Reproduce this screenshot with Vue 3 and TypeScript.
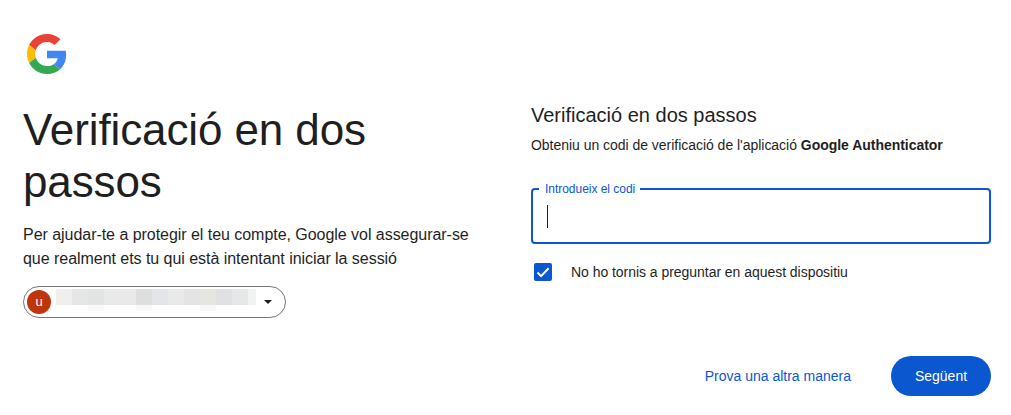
<script setup lang="ts">
const blurTop = ['#efefed', '#e5e6e6', '#e2e4e4', '#e8eaea', '#e9e9e9', '#dddfdf', '#e3e5e8', '#e8e9e9', '#e4e4e4', '#e6e6e0', '#dfe1e3', '#e5e7e8', '#f1f2f2']
const blurBottom = ['#fff', '#fff', '#f9f9f9', '#fff', '#fffffc', '#f6f7f7', '#fff', '#fff', '#fff', '#f7f7f6', '#fff', '#fff']
</script>

<template>
  <main class="page">
    <svg class="logo" viewBox="0 0 48 48" aria-label="Google">
      <path fill="#EA4335" d="M24 9.5c3.54 0 6.71 1.22 9.21 3.6l6.85-6.85C35.9 2.38 30.47 0 24 0 14.62 0 6.51 5.38 2.56 13.22l7.98 6.19C12.43 13.72 17.74 9.5 24 9.5z" />
      <path fill="#4285F4" d="M46.98 24.55c0-1.57-.15-3.09-.38-4.55H24v9.02h12.94c-.58 2.96-2.26 5.48-4.78 7.18l7.73 6c4.51-4.18 7.09-10.36 7.09-17.65z" />
      <path fill="#FBBC05" d="M10.53 28.59c-.48-1.45-.76-2.99-.76-4.59s.27-3.14.76-4.59l-7.98-6.19C.92 16.46 0 20.12 0 24c0 3.88.92 7.54 2.56 10.78l7.97-6.19z" />
      <path fill="#34A853" d="M24 48c6.48 0 11.93-2.13 15.89-5.81l-7.73-6c-2.15 1.45-4.92 2.3-8.16 2.3-6.26 0-11.57-4.22-13.47-9.91l-7.98 6.19C6.51 42.62 14.62 48 24 48z" />
    </svg>

    <div class="columns">
      <section class="intro">
        <h1>Verificació en dos passos</h1>
        <p>Per ajudar-te a protegir el teu compte, Google vol assegurar-se que realment ets tu qui està intentant iniciar la sessió</p>
        <div class="account">
          <span class="avatar">u</span>
          <span class="blur">
            <i v-for="(c, i) in blurTop" :key="'t' + i" class="top" :style="{ background: c }"></i>
            <i v-for="(c, i) in blurBottom" :key="'b' + i" class="bottom" :style="{ background: c }"></i>
          </span>
          <span class="caret"></span>
        </div>
      </section>

      <section class="form">
        <h2>Verificació en dos passos</h2>
        <p class="sub">Obteniu un codi de verificació de l'aplicació <b>Google Authenticator</b></p>
        <div class="field">
          <span class="legend">Introdueix el codi</span>
          <span class="cursor"></span>
        </div>
        <label class="check">
          <span class="box">
            <svg viewBox="0 0 18 18"><path d="M3.5 9.5l3.6 3.6L14.6 5.2" fill="none" stroke="#fff" stroke-width="2" /></svg>
          </span>
          No ho tornis a preguntar en aquest dispositiu
        </label>
        <div class="actions">
          <a class="alt">Prova una altra manera</a>
          <button class="next" type="button">Següent</button>
        </div>
      </section>
    </div>
  </main>
</template>

<style scoped>
.page {
  box-sizing: border-box;
  width: 1011px;
  height: 415px;
  padding: 30px 20px 0 23px;
  font-family: "Liberation Sans", Arial, sans-serif;
  color: #1f1f1f;
  background: #fff;
  overflow: hidden;
}
.logo {
  display: block;
  width: 40px;
  height: 40px;
  margin: 4px 0 0 4px;
}
.columns {
  display: grid;
  grid-template-columns: 508px 460px;
  margin-top: 30px;
}
h1 {
  margin: 0;
  width: 400px;
  font-size: 44px;
  font-weight: 400;
  line-height: 52px;
  letter-spacing: -0.11px;
}
.intro p {
  margin: 15px 0 0;
  width: 460px;
  font-size: 16px;
  line-height: 24px;
  letter-spacing: -0.04px;
}
.account {
  display: flex;
  align-items: center;
  box-sizing: border-box;
  width: 263px;
  height: 32px;
  margin-top: 15px;
  padding: 0 13px 0 3px;
  border: 1px solid #747775;
  border-radius: 16px;
}
.avatar {
  flex: none;
  width: 24px;
  height: 24px;
  border-radius: 50%;
  background: #bf360c;
  color: #fff;
  font-size: 13px;
  line-height: 24px;
  text-align: center;
}
.blur {
  display: flex;
  flex-wrap: wrap;
  align-self: flex-start;
  width: 200px;
  margin: 2px 0 0 5px;
}
.top {
  width: 16px;
  height: 16px;
}
.top:nth-child(13) {
  width: 8px;
}
.bottom {
  width: 16px;
  height: 6px;
}
.caret {
  margin-left: auto;
  border-left: 4px solid transparent;
  border-right: 4px solid transparent;
  border-top: 4px solid #1f1f1f;
}
h2 {
  margin: 0;
  font-size: 20px;
  font-weight: 400;
  line-height: 22px;
}
.sub {
  margin: 9px 0 0;
  font-size: 14px;
  line-height: 20px;
  letter-spacing: -0.03px;
}
.sub b {
  font-weight: 700;
}
.field {
  position: relative;
  display: flex;
  align-items: center;
  box-sizing: border-box;
  height: 56px;
  margin-top: 33px;
  padding-left: 14px;
  border: 2px solid #0b57d0;
  border-radius: 4px;
}
.legend {
  position: absolute;
  left: 6px;
  top: -9px;
  padding: 0 5px 0 6px;
  background: #fff;
  color: #0b57d0;
  font-size: 12px;
  line-height: 16px;
  letter-spacing: -0.03px;
}
.cursor {
  width: 1px;
  height: 23px;
  background: #1f1f1f;
}
.check {
  display: flex;
  align-items: center;
  height: 20px;
  margin-top: 18px;
  font-size: 14px;
  letter-spacing: -0.04px;
}
.box {
  display: flex;
  align-items: center;
  justify-content: center;
  width: 18px;
  height: 18px;
  margin: 0 19px 0 3px;
  border-radius: 2px;
  background: #0b57d0;
}
.box svg {
  width: 18px;
  height: 18px;
}
.actions {
  display: flex;
  align-items: center;
  justify-content: flex-end;
  margin-top: 74px;
}
.alt {
  color: #0b57d0;
  font-size: 14px;
  margin-right: 40px;
}
.next {
  width: 100px;
  height: 40px;
  border: 0;
  border-radius: 20px;
  background: #0b57d0;
  color: #fff;
  font: 400 14px "Liberation Sans", Arial, sans-serif;
}
</style>
